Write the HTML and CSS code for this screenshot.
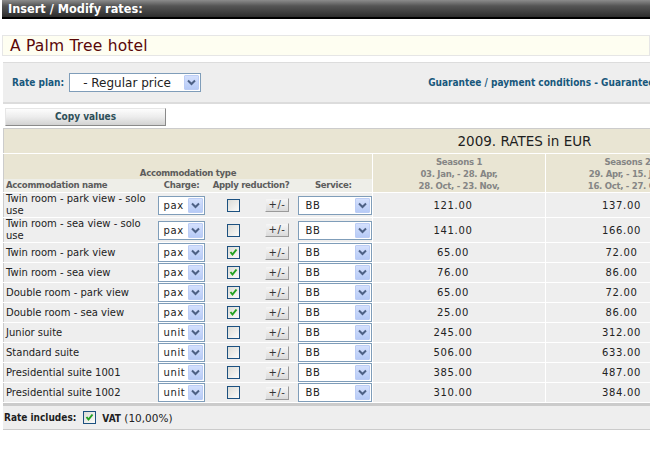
FILE: index.html
```html
<!DOCTYPE html>
<html>
<head>
<meta charset="utf-8">
<title>Insert / Modify rates</title>
<link rel="stylesheet" href="styles.css">
</head>
<body>
<div class="titlebar">Insert / Modify rates:</div>
<div class="hotel">A Palm Tree hotel</div>
<div class="planbar">
  <span class="lbl">Rate plan:</span>
  <div class="sel sel-plan"><span class="val">- Regular price</span><span class="arr"><svg width="15" height="15" viewBox="0 0 15 15"><path d="M4 5.5 L7.5 9 L11 5.5" fill="none" stroke="#4d6185" stroke-width="2"/></svg></span></div>
  <span class="guar">Guarantee / payment conditions - Guarantee required, free cancellation</span>
</div>
<div class="copy">Copy values</div>
<table class="rates">
  <colgroup>
    <col class="c-name"><col class="c-charge"><col class="c-apply"><col class="c-pm"><col class="c-serv"><col class="c-s1"><col class="c-s2"><col class="c-s3"><col class="c-s4">
  </colgroup>
  <tr class="h-title-row"><th colspan="9" class="h-title">2009. RATES in EUR</th></tr>
  <tr class="h-type-row">
    <th colspan="5" class="h-type">Accommodation type</th>
    <th rowspan="2" class="h-season">Seasons 1<br>03. Jan, - 28. Apr,<br>28. Oct, - 23. Nov,</th>
    <th rowspan="2" class="h-season">Seasons 2<br>29. Apr, - 15. Jun,<br>16. Oct, - 27. Oct,</th>
    <th rowspan="2" class="h-season">Seasons 3<br>16. Jun, - 15. Jul,<br>01. Sep, - 15. Oct,</th>
    <th rowspan="2" class="h-season">Seasons 4<br>16. Jul, - 31. Aug,<br>&nbsp;</th>
  </tr>
  <tr class="h-labels">
    <th class="h-name">Accommodation name</th>
    <th>Charge:</th>
    <th colspan="2">Apply reduction?</th>
    <th>Service:</th>
  </tr>
  <tr class="two">
    <td class="name">Twin room - park view - solo use</td>
    <td><div class="sel sel-charge"><span class="val">pax</span><span class="arr"><svg width="15" height="15" viewBox="0 0 15 15"><path d="M4 5.5 L7.5 9 L11 5.5" fill="none" stroke="#4d6185" stroke-width="2"/></svg></span></div></td>
    <td class="ctr"><span class="cb"></span></td>
    <td class="ctr"><span class="pm">+/-</span></td>
    <td><div class="sel sel-serv"><span class="val">BB</span><span class="arr"><svg width="15" height="15" viewBox="0 0 15 15"><path d="M4 5.5 L7.5 9 L11 5.5" fill="none" stroke="#4d6185" stroke-width="2"/></svg></span></div></td>
    <td class="num">121.00</td><td class="num">137.00</td><td class="num">152.00</td><td class="num">168.00</td>
  </tr>
  <tr class="two">
    <td class="name">Twin room - sea view - solo use</td>
    <td><div class="sel sel-charge"><span class="val">pax</span><span class="arr"><svg width="15" height="15" viewBox="0 0 15 15"><path d="M4 5.5 L7.5 9 L11 5.5" fill="none" stroke="#4d6185" stroke-width="2"/></svg></span></div></td>
    <td class="ctr"><span class="cb"></span></td>
    <td class="ctr"><span class="pm">+/-</span></td>
    <td><div class="sel sel-serv"><span class="val">BB</span><span class="arr"><svg width="15" height="15" viewBox="0 0 15 15"><path d="M4 5.5 L7.5 9 L11 5.5" fill="none" stroke="#4d6185" stroke-width="2"/></svg></span></div></td>
    <td class="num">141.00</td><td class="num">166.00</td><td class="num">181.00</td><td class="num">199.00</td>
  </tr>
  <tr>
    <td class="name">Twin room - park view</td>
    <td><div class="sel sel-charge"><span class="val">pax</span><span class="arr"><svg width="15" height="15" viewBox="0 0 15 15"><path d="M4 5.5 L7.5 9 L11 5.5" fill="none" stroke="#4d6185" stroke-width="2"/></svg></span></div></td>
    <td class="ctr"><span class="cb on"><svg width="11" height="11" viewBox="0 0 11 11"><path d="M2.5 5 L4.5 7.5 L8.5 2.5" fill="none" stroke="#21a121" stroke-width="2"/></svg></span></td>
    <td class="ctr"><span class="pm">+/-</span></td>
    <td><div class="sel sel-serv"><span class="val">BB</span><span class="arr"><svg width="15" height="15" viewBox="0 0 15 15"><path d="M4 5.5 L7.5 9 L11 5.5" fill="none" stroke="#4d6185" stroke-width="2"/></svg></span></div></td>
    <td class="num">65.00</td><td class="num">72.00</td><td class="num">81.00</td><td class="num">92.00</td>
  </tr>
  <tr>
    <td class="name">Twin room - sea view</td>
    <td><div class="sel sel-charge"><span class="val">pax</span><span class="arr"><svg width="15" height="15" viewBox="0 0 15 15"><path d="M4 5.5 L7.5 9 L11 5.5" fill="none" stroke="#4d6185" stroke-width="2"/></svg></span></div></td>
    <td class="ctr"><span class="cb on"><svg width="11" height="11" viewBox="0 0 11 11"><path d="M2.5 5 L4.5 7.5 L8.5 2.5" fill="none" stroke="#21a121" stroke-width="2"/></svg></span></td>
    <td class="ctr"><span class="pm">+/-</span></td>
    <td><div class="sel sel-serv"><span class="val">BB</span><span class="arr"><svg width="15" height="15" viewBox="0 0 15 15"><path d="M4 5.5 L7.5 9 L11 5.5" fill="none" stroke="#4d6185" stroke-width="2"/></svg></span></div></td>
    <td class="num">76.00</td><td class="num">86.00</td><td class="num">95.00</td><td class="num">108.00</td>
  </tr>
  <tr>
    <td class="name">Double room - park view</td>
    <td><div class="sel sel-charge"><span class="val">pax</span><span class="arr"><svg width="15" height="15" viewBox="0 0 15 15"><path d="M4 5.5 L7.5 9 L11 5.5" fill="none" stroke="#4d6185" stroke-width="2"/></svg></span></div></td>
    <td class="ctr"><span class="cb on"><svg width="11" height="11" viewBox="0 0 11 11"><path d="M2.5 5 L4.5 7.5 L8.5 2.5" fill="none" stroke="#21a121" stroke-width="2"/></svg></span></td>
    <td class="ctr"><span class="pm">+/-</span></td>
    <td><div class="sel sel-serv"><span class="val">BB</span><span class="arr"><svg width="15" height="15" viewBox="0 0 15 15"><path d="M4 5.5 L7.5 9 L11 5.5" fill="none" stroke="#4d6185" stroke-width="2"/></svg></span></div></td>
    <td class="num">65.00</td><td class="num">72.00</td><td class="num">81.00</td><td class="num">92.00</td>
  </tr>
  <tr>
    <td class="name">Double room - sea view</td>
    <td><div class="sel sel-charge"><span class="val">pax</span><span class="arr"><svg width="15" height="15" viewBox="0 0 15 15"><path d="M4 5.5 L7.5 9 L11 5.5" fill="none" stroke="#4d6185" stroke-width="2"/></svg></span></div></td>
    <td class="ctr"><span class="cb on"><svg width="11" height="11" viewBox="0 0 11 11"><path d="M2.5 5 L4.5 7.5 L8.5 2.5" fill="none" stroke="#21a121" stroke-width="2"/></svg></span></td>
    <td class="ctr"><span class="pm">+/-</span></td>
    <td><div class="sel sel-serv"><span class="val">BB</span><span class="arr"><svg width="15" height="15" viewBox="0 0 15 15"><path d="M4 5.5 L7.5 9 L11 5.5" fill="none" stroke="#4d6185" stroke-width="2"/></svg></span></div></td>
    <td class="num">25.00</td><td class="num">86.00</td><td class="num">95.00</td><td class="num">108.00</td>
  </tr>
  <tr>
    <td class="name">Junior suite</td>
    <td><div class="sel sel-charge"><span class="val">unit</span><span class="arr"><svg width="15" height="15" viewBox="0 0 15 15"><path d="M4 5.5 L7.5 9 L11 5.5" fill="none" stroke="#4d6185" stroke-width="2"/></svg></span></div></td>
    <td class="ctr"><span class="cb"></span></td>
    <td class="ctr"><span class="pm">+/-</span></td>
    <td><div class="sel sel-serv"><span class="val">BB</span><span class="arr"><svg width="15" height="15" viewBox="0 0 15 15"><path d="M4 5.5 L7.5 9 L11 5.5" fill="none" stroke="#4d6185" stroke-width="2"/></svg></span></div></td>
    <td class="num">245.00</td><td class="num">312.00</td><td class="num">345.00</td><td class="num">380.00</td>
  </tr>
  <tr>
    <td class="name">Standard suite</td>
    <td><div class="sel sel-charge"><span class="val">unit</span><span class="arr"><svg width="15" height="15" viewBox="0 0 15 15"><path d="M4 5.5 L7.5 9 L11 5.5" fill="none" stroke="#4d6185" stroke-width="2"/></svg></span></div></td>
    <td class="ctr"><span class="cb"></span></td>
    <td class="ctr"><span class="pm">+/-</span></td>
    <td><div class="sel sel-serv"><span class="val">BB</span><span class="arr"><svg width="15" height="15" viewBox="0 0 15 15"><path d="M4 5.5 L7.5 9 L11 5.5" fill="none" stroke="#4d6185" stroke-width="2"/></svg></span></div></td>
    <td class="num">506.00</td><td class="num">633.00</td><td class="num">690.00</td><td class="num">745.00</td>
  </tr>
  <tr>
    <td class="name">Presidential suite 1001</td>
    <td><div class="sel sel-charge"><span class="val">unit</span><span class="arr"><svg width="15" height="15" viewBox="0 0 15 15"><path d="M4 5.5 L7.5 9 L11 5.5" fill="none" stroke="#4d6185" stroke-width="2"/></svg></span></div></td>
    <td class="ctr"><span class="cb"></span></td>
    <td class="ctr"><span class="pm">+/-</span></td>
    <td><div class="sel sel-serv"><span class="val">BB</span><span class="arr"><svg width="15" height="15" viewBox="0 0 15 15"><path d="M4 5.5 L7.5 9 L11 5.5" fill="none" stroke="#4d6185" stroke-width="2"/></svg></span></div></td>
    <td class="num">385.00</td><td class="num">487.00</td><td class="num">530.00</td><td class="num">575.00</td>
  </tr>
  <tr>
    <td class="name">Presidential suite 1002</td>
    <td><div class="sel sel-charge"><span class="val">unit</span><span class="arr"><svg width="15" height="15" viewBox="0 0 15 15"><path d="M4 5.5 L7.5 9 L11 5.5" fill="none" stroke="#4d6185" stroke-width="2"/></svg></span></div></td>
    <td class="ctr"><span class="cb"></span></td>
    <td class="ctr"><span class="pm">+/-</span></td>
    <td><div class="sel sel-serv"><span class="val">BB</span><span class="arr"><svg width="15" height="15" viewBox="0 0 15 15"><path d="M4 5.5 L7.5 9 L11 5.5" fill="none" stroke="#4d6185" stroke-width="2"/></svg></span></div></td>
    <td class="num">310.00</td><td class="num">384.00</td><td class="num">420.00</td><td class="num">460.00</td>
  </tr>
</table>
<div class="footer">
  <span class="inc">Rate includes:</span>
  <span class="cb on"><svg width="11" height="11" viewBox="0 0 11 11"><path d="M2.5 5 L4.5 7.5 L8.5 2.5" fill="none" stroke="#21a121" stroke-width="2"/></svg></span>
  <span class="vat"><b>VAT</b> (10,00%)</span>
</div>
<div class="bottomline"></div>
</body>
</html>
```

FILE: styles.css
```css
html, body {
  margin: 0;
  padding: 0;
  overflow: hidden;
  background: #fff;
}
body {
  width: 650px;
  font-family: "DejaVu Sans", Verdana, sans-serif;
  font-size: 10px;
  color: #222;
}
.titlebar {
  margin-left: 2px;
  height: 17px;
  padding-left: 6px;
  background: linear-gradient(#8c8c8c, #555 35%, #2e2e2e);
  border-bottom: 2px solid #000;
  color: #fff;
  font-family: "DejaVu Sans Condensed", "DejaVu Sans", sans-serif;
  font-weight: bold;
  font-size: 12.6px;
  line-height: 18px;
  white-space: nowrap;
}
.hotel {
  margin: 16px 0 0 2px;
  height: 19px;
  padding-left: 7px;
  border: 1px solid #e6e6e6;
  background: #fefef1;
  color: #5a0808;
  font-size: 15.5px;
  letter-spacing: 0.2px;
  line-height: 20px;
  white-space: nowrap;
}
.planbar {
  margin: 6px 0 0 3px;
  height: 39px;
  display: flex;
  align-items: center;
  background: #eee;
  border-top: 1px solid #dcdcdc;
  border-bottom: 2px solid #dcdcdc;
  white-space: nowrap;
  overflow: hidden;
}
.lbl, .guar {
  font-family: "DejaVu Sans Condensed", "DejaVu Sans", sans-serif;
  font-weight: bold;
  font-size: 10px;
  color: #18587c;
}
.lbl { margin-left: 9px; margin-right: 5px; flex-shrink: 0; }
.guar { margin-left: 227px; flex-shrink: 0; }
.sel {
  box-sizing: border-box;
  flex-shrink: 0;
  display: flex;
  align-items: center;
  justify-content: space-between;
  height: 19px;
  padding: 1px;
  background: #fff;
  border: 1px solid #7f9db9;
}
.sel .val {
  padding-left: 4px;
  white-space: nowrap;
  letter-spacing: 0.6px;
}
.sel .arr {
  display: block;
  width: 15px;
  height: 15px;
  box-sizing: border-box;
  border: 1px solid #bccdf5;
  border-radius: 1px;
  background: linear-gradient(#d4e0fd, #b7cbf6);
}
.sel .arr svg { display: block; margin: -1px; }
.sel-plan { width: 132px; }
.sel-plan .val { padding-left: 12px; font-size: 12px; letter-spacing: 0; }
.sel-charge { width: 47px; margin-left: 2px; }
.sel-serv { width: 74px; margin-left: 3px; }
.sel-serv .val { padding-left: 6px; }
.copy {
  box-sizing: border-box;
  margin: 4px 0 0 5px;
  width: 161px;
  height: 18px;
  border: 1px solid;
  border-color: #e6e6e6 #8a8a8a #8a8a8a #e6e6e6;
  background: linear-gradient(#fdfdfd, #ececec 50%, #d2d2d2);
  text-align: center;
  font-family: "DejaVu Sans Condensed", "DejaVu Sans", sans-serif;
  font-weight: bold;
  font-size: 10px;
  line-height: 16px;
  color: #2d4f58;
}
.rates {
  margin: 2px 0 0 3px;
  width: 1042px;
  border-collapse: collapse;
  table-layout: fixed;
  border-top: 1px solid #ccc;
  border-left: 1px solid #ccc;
}
.c-name { width: 152px; }
.c-charge { width: 52px; }
.c-apply { width: 52px; }
.c-pm { width: 35px; }
.c-serv { width: 78px; }
.c-s1 { width: 173px; }
.c-s2 { width: 164px; }
.c-s3 { width: 168px; }
.c-s4 { width: 168px; }
.rates th, .rates td {
  padding: 0;
  border: 1px solid #fff;
}
.rates tr:first-child th { border-top: 0; }
.rates th:first-child, .rates td:first-child { border-left: 0; }
.h-title {
  height: 24px;
  background: #e9e5d3;
  font-weight: normal;
  font-size: 13.5px;
  color: #1e1e1e;
  text-align: center;
}
.h-type {
  height: 23px;
  vertical-align: bottom;
  background: #e9e5d3;
  border-bottom: 0 !important;
}
.h-type, .h-labels th, .h-season {
  font-family: "DejaVu Sans Condensed", "DejaVu Sans", sans-serif;
  font-weight: bold;
  font-size: 9.5px;
  letter-spacing: -0.3px;
  line-height: 12px;
  color: #5c5c5c;
}
.h-labels th {
  height: 12px;
  background: #eeeee8;
  border-top: 0;
  border-left: 0;
  border-right: 0;
  text-align: center;
  white-space: nowrap;
}
.h-labels .h-name { text-align: left; padding-left: 2px; }
.h-season {
  background: #e9e5d3;
  color: #858585;
  text-align: center;
  vertical-align: top;
  padding-top: 2px !important;
  white-space: nowrap;
}
.rates td {
  height: 19px;
  background: #eee;
  border-left: 0;
  border-right: 0;
}
.rates td.num {
  border-left: 1px solid #fff;
  text-align: center;
  padding-right: 12px;
  letter-spacing: 0.7px;
  color: #222;
}
.rates tr.two td { height: 24px; }
.name {
  padding-left: 2px !important;
  line-height: 12px;
  color: #222;
}
.ctr { text-align: center; }
.cb {
  display: inline-block;
  box-sizing: border-box;
  width: 13px;
  height: 13px;
  vertical-align: middle;
  border: 1px solid #1c5180;
  background: linear-gradient(135deg, #dcdcd7, #fbfbf9);
}
.cb svg { display: block; }
.pm {
  display: inline-block;
  box-sizing: border-box;
  width: 24px;
  height: 14px;
  vertical-align: middle;
  border: 1px solid;
  border-color: #eee #9a9a9a #9a9a9a #eee;
  background: linear-gradient(#f6f6f6, #dadada);
  font-size: 10px;
  letter-spacing: 0.5px;
  line-height: 12px;
  color: #333;
  text-align: center;
}
.footer {
  margin-left: 3px;
  height: 23px;
  display: flex;
  align-items: center;
  background: #eee;
  border-top: 3px solid #cbcbcb;
  border-bottom: 1px solid #cbcbcb;
  white-space: nowrap;
}
.inc {
  margin-left: 1px;
  margin-right: 7px;
  font-family: "DejaVu Sans Condensed", "DejaVu Sans", sans-serif;
  font-weight: bold;
  font-size: 10px;
  color: #1e1e1e;
}
.vat { margin-left: 6px; font-size: 10.5px; }
.vat b {
  font-family: "DejaVu Sans Condensed", "DejaVu Sans", sans-serif;
  font-size: 10px;
}
.bottomline {
  margin: 20px 0 0 3px;
  border-top: 1px solid #cbcbcb;
}
```
